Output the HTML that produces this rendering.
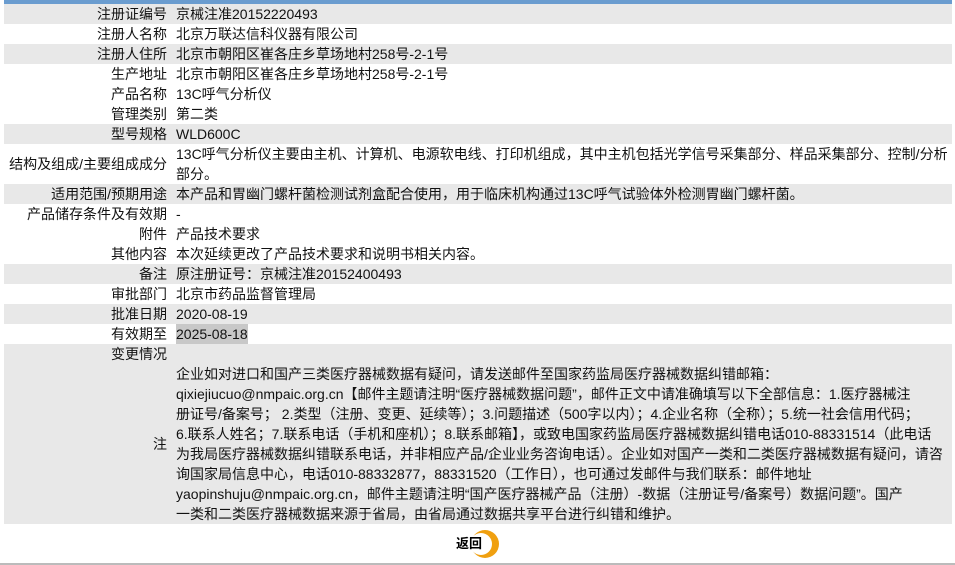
<html><head><style>
body{margin:0;width:955px;height:565px;overflow:hidden;background:#fff;font-family:"Liberation Sans","Noto Sans CJK SC",sans-serif;font-size:14px;color:#111;position:relative}
.top{position:absolute;left:4px;top:0;width:948px;height:4px;background:#6a9ccf}
.r{position:absolute;left:4px;width:948px;line-height:20px}
.g{background:#e8e8e8}
.l{position:absolute;left:0;width:163px;text-align:right;white-space:nowrap}
.v{position:absolute;left:172px;white-space:nowrap}
.bot{position:absolute;left:0;top:563px;width:955px;height:2px;background:#bbb}
</style></head><body>
<div class="top"></div>
<div class="r g" style="top:4px;height:20px"><span class="l">注册证编号</span><span class="v">京械注准20152220493</span></div>
<div class="r" style="top:24px;height:20px"><span class="l">注册人名称</span><span class="v">北京万联达信科仪器有限公司</span></div>
<div class="r g" style="top:44px;height:20px"><span class="l">注册人住所</span><span class="v">北京市朝阳区崔各庄乡草场地村258号-2-1号</span></div>
<div class="r" style="top:64px;height:20px"><span class="l">生产地址</span><span class="v">北京市朝阳区崔各庄乡草场地村258号-2-1号</span></div>
<div class="r" style="top:84px;height:20px"><span class="l">产品名称</span><span class="v">13C呼气分析仪</span></div>
<div class="r" style="top:104px;height:20px"><span class="l">管理类别</span><span class="v">第二类</span></div>
<div class="r g" style="top:124px;height:20px"><span class="l">型号规格</span><span class="v">WLD600C</span></div>
<div class="r" style="top:144px;height:40px"><span class="l" style="top:10px">结构及组成/主要组成成分</span><span class="v">13C呼气分析仪主要由主机、计算机、电源软电线、打印机组成，其中主机包括光学信号采集部分、样品采集部分、控制/分析<br>部分。</span></div>
<div class="r g" style="top:184px;height:20px"><span class="l">适用范围/预期用途</span><span class="v">本产品和胃幽门螺杆菌检测试剂盒配合使用，用于临床机构通过13C呼气试验体外检测胃幽门螺杆菌。</span></div>
<div class="r" style="top:204px;height:20px"><span class="l">产品储存条件及有效期</span><span class="v">-</span></div>
<div class="r" style="top:224px;height:20px"><span class="l">附件</span><span class="v">产品技术要求</span></div>
<div class="r" style="top:244px;height:20px"><span class="l">其他内容</span><span class="v">本次延续更改了产品技术要求和说明书相关内容。</span></div>
<div class="r g" style="top:264px;height:20px"><span class="l">备注</span><span class="v">原注册证号：京械注准20152400493</span></div>
<div class="r" style="top:284px;height:20px"><span class="l">审批部门</span><span class="v">北京市药品监督管理局</span></div>
<div class="r g" style="top:304px;height:20px"><span class="l">批准日期</span><span class="v">2020-08-19</span></div>
<div class="r" style="top:324px;height:20px"><span class="l">有效期至</span><span class="v" style="background:#c8c8c8">2025-08-18</span></div>
<div class="r g" style="top:344px;height:180px"><span class="l">变更情况</span><span class="l" style="top:90px">注</span><span class="v" style="top:20px">企业如对进口和国产三类医疗器械数据有疑问，请发送邮件至国家药监局医疗器械数据纠错邮箱：<br>qixiejiucuo@nmpaic.org.cn【邮件主题请注明“医疗器械数据问题”，邮件正文中请准确填写以下全部信息：1.医疗器械注<br>册证号/备案号； 2.类型（注册、变更、延续等）；3.问题描述（500字以内）；4.企业名称（全称）；5.统一社会信用代码；<br>6.联系人姓名；7.联系电话（手机和座机）；8.联系邮箱】，或致电国家药监局医疗器械数据纠错电话010-88331514（此电话<br>为我局医疗器械数据纠错联系电话，并非相应产品/企业业务咨询电话）。企业如对国产一类和二类医疗器械数据有疑问，请咨<br>询国家局信息中心，电话010-88332877，88331520（工作日），也可通过发邮件与我们联系：邮件地址<br>yaopinshuju@nmpaic.org.cn，邮件主题请注明“国产医疗器械产品（注册）-数据（注册证号/备案号）数据问题”。国产<br>一类和二类医疗器械数据来源于省局，由省局通过数据共享平台进行纠错和维护。</span></div>
<svg style="position:absolute;left:465px;top:529px" width="40" height="32"><circle cx="20" cy="15" r="14" fill="#f0a010"/><circle cx="16" cy="15" r="11" fill="#fff"/></svg>
<div style="position:absolute;left:456px;top:535px;font-weight:bold;font-size:13px;line-height:18px;color:#000">返回</div>
<div class="bot"></div>
</body></html>
